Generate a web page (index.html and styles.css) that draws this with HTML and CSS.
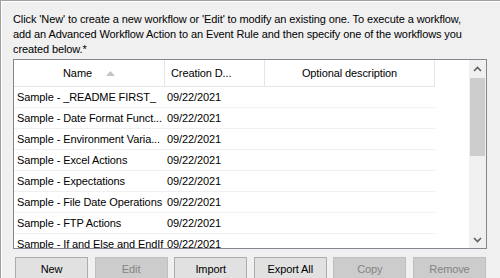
FILE: index.html
```html
<!DOCTYPE html>
<html lang="en">
<head>
    <meta charset="UTF-8">
    <title>Workflows</title>
    <link rel="stylesheet" href="styles.css">
</head>
<body>
    <div class="frame">
        <p class="intro">Click 'New' to create a new workflow or 'Edit' to modify an existing one. To execute a workflow,<br>add an Advanced Workflow Action to an Event Rule and then specify one of the workflows you<br>created below.*</p>

        <div class="listbox">
            <div class="list-main">
                <div class="row header">
                    <div class="cell center"><span class="name-head">Name
                        <svg width="9" height="5" viewBox="0 0 9 5"><polygon points="0,5 4.5,0 9,5" fill="#c4c4c4"/></svg></span>
                    </div>
                    <div class="cell">Creation D...</div>
                    <div class="cell center">Optional description</div>
                </div>
                <div class="rows">
                    <div class="row"><div class="cell">Sample - _README FIRST_</div><div class="cell">09/22/2021</div><div class="cell"></div></div>
                    <div class="row"><div class="cell">Sample - Date Format Funct...</div><div class="cell">09/22/2021</div><div class="cell"></div></div>
                    <div class="row"><div class="cell">Sample - Environment Varia...</div><div class="cell">09/22/2021</div><div class="cell"></div></div>
                    <div class="row"><div class="cell">Sample - Excel Actions</div><div class="cell">09/22/2021</div><div class="cell"></div></div>
                    <div class="row"><div class="cell">Sample - Expectations</div><div class="cell">09/22/2021</div><div class="cell"></div></div>
                    <div class="row"><div class="cell">Sample - File Date Operations</div><div class="cell">09/22/2021</div><div class="cell"></div></div>
                    <div class="row"><div class="cell">Sample - FTP Actions</div><div class="cell">09/22/2021</div><div class="cell"></div></div>
                    <div class="row"><div class="cell">Sample - If and Else and EndIf</div><div class="cell">09/22/2021</div><div class="cell"></div></div>
                </div>
            </div>
            <div class="scrollbar">
                <div class="arrow">
                    <svg width="9" height="6" viewBox="0 0 9 6"><polyline points="1,5 4.5,1.5 8,5" fill="none" stroke="#606060" stroke-width="1.6"/></svg>
                </div>
                <div class="track">
                    <div class="thumb"></div>
                </div>
                <div class="arrow">
                    <svg width="9" height="6" viewBox="0 0 9 6"><polyline points="1,1 4.5,4.5 8,1" fill="none" stroke="#606060" stroke-width="1.6"/></svg>
                </div>
            </div>
        </div>

        <div class="buttons">
            <button>New</button>
            <button disabled>Edit</button>
            <button>Import</button>
            <button>Export All</button>
            <button disabled>Copy</button>
            <button disabled>Remove</button>
        </div>
    </div>
</body>
</html>
```

FILE: styles.css
```css
body {
    margin: 0;
    background-color: #f0f0f0;
    font-family: "Liberation Sans", Arial, sans-serif;
    font-size: 11px;
    letter-spacing: -0.1px;
    color: #000;
    overflow: hidden;
}
.frame {
    height: 278px;
    border-top: 1px solid #a0a0a0;
    border-left: 1px solid #a0a0a0;
    box-shadow: inset 1px 1px 0 #fff;
    padding: 0 0 0 12px;
    box-sizing: border-box;
}
.intro {
    margin: 11px 0 0;
    line-height: 15px;
    white-space: nowrap;
}
.listbox {
    display: flex;
    margin-top: 2px;
    width: 474px;
    height: 190px;
    border: 1px solid #828790;
    background-color: #fff;
    box-sizing: border-box;
}
.list-main {
    flex: 1;
    overflow: hidden;
}
.row {
    display: grid;
    grid-template-columns: 151px 100px 170px;
    width: 421px;
    height: 21px;
    border-bottom: 1px solid #f0f0f0;
    box-sizing: border-box;
}
.row .cell {
    padding: 0 3px;
    line-height: 20px;
    white-space: nowrap;
    overflow: hidden;
}
.row .cell:nth-child(2) {
    padding-left: 2px;
}
.header {
    height: 27px;
    border-bottom: 1px solid #e5e5e5;
}
.header .cell {
    line-height: 26px;
    border-right: 1px solid #e5e5e5;
}
.header .cell:nth-child(2) {
    padding-left: 6px;
}
.center {
    text-align: center;
}
.name-head {
    display: inline-flex;
    align-items: center;
    gap: 14px;
}
.scrollbar {
    width: 17px;
    display: flex;
    flex-direction: column;
    background-color: #f0f0f0;
}
.arrow {
    height: 17px;
    display: flex;
    align-items: center;
    justify-content: center;
}
.track {
    flex: 1;
    padding-top: 1px;
}
.thumb {
    height: 78px;
    margin: 0 1px;
    background-color: #cdcdcd;
}
.buttons {
    display: flex;
    justify-content: space-between;
    width: 473px;
    margin-top: 8px;
    padding-left: 2px;
    box-sizing: border-box;
}
button {
    width: 73px;
    height: 23px;
    padding: 0;
    font-family: inherit;
    font-size: 11px;
    letter-spacing: -0.1px;
    color: #000;
    background-color: #e1e1e1;
    border: 1px solid #adadad;
    border-radius: 0;
}
button:disabled {
    color: #838383;
    background-color: #cccccc;
    border-color: #bfbfbf;
}
```
